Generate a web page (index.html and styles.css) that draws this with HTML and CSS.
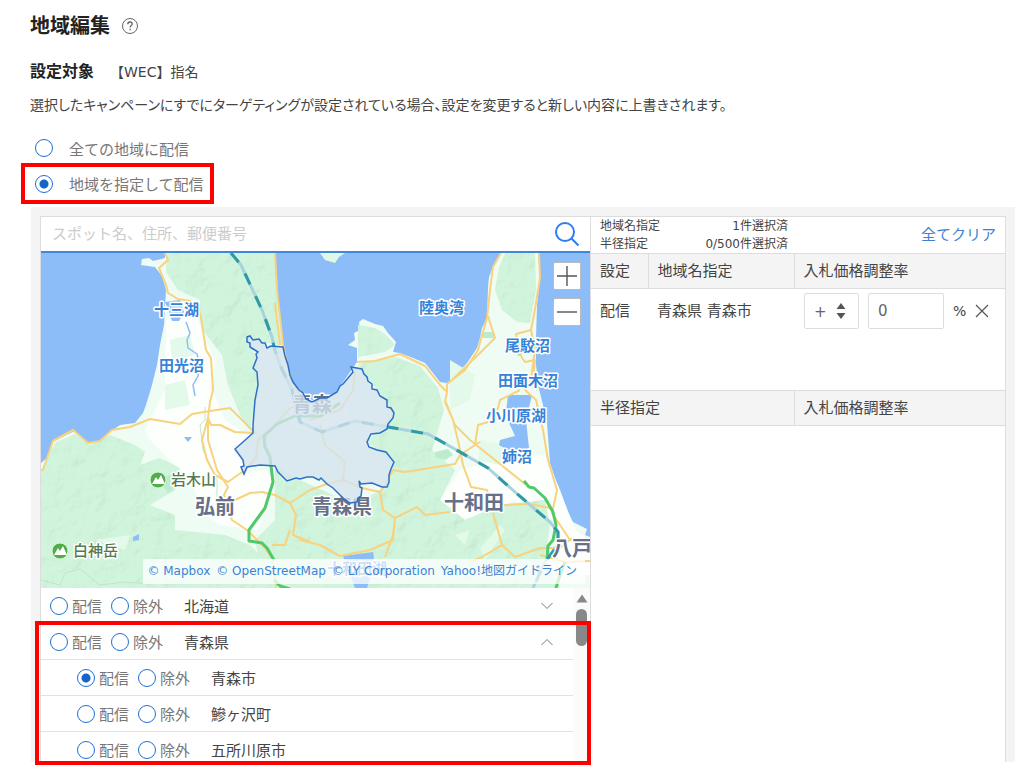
FILE: index.html
```html
<!DOCTYPE html>
<html lang="ja">
<head>
    <meta charset="UTF-8">
    <meta name="viewport" content="width=device-width, initial-scale=1">
    <title>地域編集</title>
    <link rel="stylesheet" href="styles.css">
</head>
<body>
    <header class="page-head">
        <h1>地域編集</h1>
        <button class="icon-btn" type="button" aria-label="ヘルプ">
            <svg width="18" height="18" viewBox="0 0 18 18" fill="none" stroke="#666">
                <circle cx="9" cy="9" r="7.5"/>
                <path d="M6.8 7.2c0-1.4 1-2.2 2.2-2.2s2.2.8 2.2 2c0 1.5-2.1 1.7-2.1 3.4M9.1 11.8v1.4" stroke-width="1.3"/>
            </svg>
        </button>
    </header>

    <div class="target">
        <strong>設定対象</strong>
        <span>【WEC】指名</span>
    </div>
    <p class="note">選択したキャンペーンにすでにターゲティングが設定されている場合、設定を変更すると新しい内容に上書きされます。</p>

    <div class="modes">
        <label class="mode"><input type="radio" name="mode">全ての地域に配信</label>
        <label class="mode marked"><input type="radio" name="mode" checked>地域を指定して配信</label>
    </div>

    <main class="panel">
        <section class="left">
            <form class="search">
                <input type="text" placeholder="スポット名、住所、郵便番号" aria-label="スポット名、住所、郵便番号">
                <button class="icon-btn" type="button" aria-label="検索">
                    <svg width="26" height="26" viewBox="0 0 26 26" fill="none" stroke="#2b7df0" stroke-width="2">
                        <circle cx="11" cy="11" r="9"/>
                        <path d="M17.5 17.5l7 7"/>
                    </svg>
                </button>
            </form>

            <div class="map">
                <svg class="map-canvas" viewBox="41 253 549 335" preserveAspectRatio="xMidYMid slice">
                    <defs>
                        <filter id="relief" x="0" y="0" width="100%" height="100%">
                            <feTurbulence type="fractalNoise" baseFrequency="0.05" numOctaves="4" seed="8"/>
                            <feDiffuseLighting surfaceScale="3" lighting-color="#ffffff" diffuseConstant="1.2">
                                <feDistantLight azimuth="225" elevation="55"/>
                            </feDiffuseLighting>
                        </filter>
                        <clipPath id="forest-clip">
                            <path d="M167 253H275L277 302L282 345L265 343L247 337L257 360L258 385L250 430L240 415L228 385L222 355L205 333L200 318V300L178 290L166 272ZM41 470L55 443L75 434L90 445L110 435L135 445L145 452L140 465L160 458L180 468L175 490L150 505L175 515V530L225 535L250 545L265 560V588H41ZM275 466L300 480L355 505L388 485L394 462L367 442L394 413L362 370L358 364L395 357L420 366L438 388L444 410L432 450L455 470L440 500L465 520L500 505L545 500L550 525L545 560L560 588H265L255 540L275 520ZM505 253H535L536 290L530 323L517 322L502 310L495 290L499 268ZM358 325L375 328L385 334L395 345L385 352L358 357Z"/>
                        </clipPath>
                    </defs>

                    <!-- sea and land -->
                    <rect x="41" y="253" width="549" height="335" fill="#8dbdf8"/>
                    <path fill="#effcf3" d="M165 253V258L153 261L149 258L142 259L141 265L155 267L162 276L166 290L164 325L160 345L157 365L152 385L146 405L143 413L135 423L120 425L110 432L100 442L88 443L75 431L53 441L47 458L41 463V588H590V537L585 535L587 529L573 522L567 510L558 487L550 463L547 423L543 405L538 385L536 365V338L537 305L540 278L538 253H500L493 267L489 277L488 288L487 318L482 328L480 338L477 348L467 363L453 378L447 383L440 382L433 373L425 363L413 358L400 353L393 352L396 342L388 333L383 326L375 324L363 319L359 322L360 330L354 333L355 340L348 345L357 348V362L353 368L343 382L337 392L327 398L312 402L303 393L293 382L288 365L283 347L282 328L278 302L277 278L275 253Z"/>
                    <path fill="#dff7e6" d="M320 253L325 260L335 263L339 257L345 253Z"/>
                    <path fill="#fcfffc" d="M166 320L196 315L205 340L215 360L212 390L225 420L248 436L240 455L246 472L274 470L270 500L258 530L220 525L205 515L190 480L150 440L145 430L165 390ZM440 500L460 470L500 460L545 455L560 490L575 530L590 540V575H560L553 520L515 500L490 515L455 520ZM285 405L305 400L345 400L350 420L320 435L290 425Z"/>
                    <g clip-path="url(#forest-clip)">
                        <rect x="41" y="253" width="549" height="335" fill="#d0f4dc"/>
                        <rect class="relief" x="41" y="253" width="549" height="335" filter="url(#relief)"/>
                    </g>
                    <path fill="#e3f9ea" d="M450 360L475 375L470 400L450 410ZM480 440L505 445L500 465L478 460ZM455 535L470 530L465 545ZM480 548L500 525L505 530L485 560ZM170 340L190 335L195 355L172 360ZM165 385L185 380L190 405L165 410ZM95 540L130 535L125 550Z"/>
                    <path fill="#bdebcb" d="M435 452L448 449L453 455L445 460L435 457ZM483 332H494V338H483ZM157 480L170 475L180 482L168 492Z"/>

                    <!-- lakes and rivers -->
                    <path fill="#8dbdf8" d="M165 302L180 300L184 312L179 321L172 321L170 315ZM184 437L192 437L188 442ZM133 537L139 534L139 540L133 541ZM508 395L532 395L526 420L529 448L520 453L508 450L499 445L500 440L515 436L510 425L506 412ZM343 556L373 552L375 565L367 588H355L350 575ZM519 338L526 338V352L518 356Z"/>
                    <path class="river" d="M186 322L190 333L187 340L188 348L197 354L200 365L198 376L193 385L195 396"/>
                    <path class="stream" d="M205 407V420L200 425L203 450L217 480V505M41 580L60 585L65 573L80 569L100 585L125 582L150 584"/>

                    <!-- national roads -->
                    <path class="road" d="M165 253L168 260L159 268L166 285L168 293L178 299L191 301M198 305L201 318L206 350L211 358L213 390L210 402L208 418M275 253L277 290L283 345L291 380L300 395M275 303L280 345"/>
                    <path class="road" d="M41 470L43 470L53 441L73 430L88 443L100 441L112 430L130 427L150 419L180 424L192 414L210 411L230 408L240 418L255 433L235 432L220 425L211 425L208 418L202 440L207 460L215 475L228 482L245 470L256 458L258 440L275 425L290 408L310 403"/>
                    <path class="road" d="M208 418L208 440L217 470L228 487L224 495L232 520L247 530L265 548L273 560L276 588M235 500L250 493L262 492L275 495L290 503L310 490L327 484L343 480L362 488L380 492L385 485L393 470L405 472L430 468L455 464L460 455L475 445L480 442M290 503L296 515L293 535L310 542M290 530L285 545L272 545"/>
                    <path class="road" d="M320 425L325 445L345 462L343 480M380 492L383 510L395 518L393 535L385 557M395 518L417 507L425 515L450 512M395 518L393 540L370 550L340 556L320 545L300 540M502 505L530 504L550 508M493 513L502 545L515 557L540 548L560 548L572 538M502 545L480 558L470 562"/>
                    <path class="road" d="M357 362L375 361L400 354L425 366L440 385L447 392L445 402L453 420L459 445L463 465L471 487L487 490L489 497M447 392V384L465 370L478 350L487 318L490 290L493 267L501 253M450 382L478 355L495 338L488 316M445 400L455 425L470 440L485 452L505 468L525 484M475 445L478 425L495 420L500 400L520 390"/>
                    <path class="road" d="M539 253L540 278L534 315L531 330L516 334L518 352L525 362L535 360L533 380L525 390L536 400L543 430L548 460L557 490L552 513L570 540L590 545M531 330L535 350L530 385M540 555L565 562L590 561M310 420L340 410L353 390L355 372"/>

                    <!-- expressway -->
                    <path class="expressway" d="M340 403L320 416L295 416L277 424L264 436L265 447L270 457L271 466L273 482L265 508L249 530V541L262 543L267 548L274 560M524 481L529 487L534 488L545 498L553 512L556 525L553 540L548 546L547 560M274 580L280 586L290 589M565 562L560 575L556 588"/>

                    <!-- shinkansen -->
                    <path class="rail" d="M231 253L241 265L262 310L272 337L274 347L280 365L292 390L300 422L322 432L355 421L388 427L428 434L453 448L488 468L515 492L550 522L558 532V545L545 562L533 588"/>
                    <path class="rail-dash" d="M231 253L241 265L262 310L272 337L274 347L280 365L292 390L300 422L322 432L355 421L388 427L428 434L453 448L488 468L515 492L550 522L558 532V545L545 562L533 588"/>

                    <text class="place city" x="292" y="412">青森</text>
                    <text class="place city" x="312" y="514">青森県</text>

                    <!-- Aomori city boundary -->
                    <path class="area" d="M247 337L250 336L253 340L259 339L262 343L265 343L267 348L271 346L283 347L285 356L288 365L290 375L293 382L299 390L303 393L306 399L312 402L320 398L327 398L337 392L340 386L343 384L353 372L351 367L362 369L364 374L367 377L368 381L372 384L372 389L377 390L380 396L387 400V407L391 408L394 413L393 418L388 424L387 429L380 433L371 434L367 442L369 447L377 450L386 452L394 462L391 469L389 475V482L387 487L382 487L372 483L361 484L359 481L360 487L362 488L361 496L358 498L357 502L350 503L343 498L333 488L327 484L321 478L319 480L313 477L307 477L300 479L296 478L287 481L278 472L275 466L260 465L247 467L244 474L241 467L244 466L243 460L235 449L243 442L253 433V425L255 400L258 385L257 372L253 368L257 358L256 354L258 352L250 347V343L247 342Z"/>

                    <g class="place lake">
                        <text x="154" y="315">十三湖</text>
                        <text x="159" y="371">田光沼</text>
                        <text x="419" y="313">陸奥湾</text>
                        <text x="505" y="351">尾駮沼</text>
                        <text x="498" y="386">田面木沼</text>
                        <text x="486" y="421">小川原湖</text>
                        <text x="502" y="462">姉沼</text>
                        <text x="327" y="574">十和田湖</text>
                    </g>
                    <g class="place city">
                        <text x="195" y="514">弘前</text>
                        <text x="444" y="510">十和田</text>
                        <text x="552" y="556">八戸</text>
                    </g>
                    <g class="place peak">
                        <text x="171" y="485">岩木山</text>
                        <text x="73" y="556">白神岳</text>
                    </g>
                    <g class="peak-mark">
                        <circle cx="158" cy="480" r="8"/>
                        <path d="M152 484L156 477L158 480L161 475L165 484Z"/>
                        <circle cx="60" cy="551" r="8"/>
                        <path d="M54 555L58 548L60 551L63 546L67 555Z"/>
                    </g>
                </svg>

                <div class="zoom">
                    <button type="button" aria-label="拡大">
                        <svg width="20" height="20" viewBox="0 0 20 20" stroke="#555" stroke-width="1.4"><path d="M0 10H20M10 0V20"/></svg>
                    </button>
                    <button type="button" aria-label="縮小">
                        <svg width="20" height="20" viewBox="0 0 20 20" stroke="#555" stroke-width="1.4"><path d="M0 10H20"/></svg>
                    </button>
                </div>
                <div class="credits">
                    <a href="#">© Mapbox</a>
                    <a href="#">© OpenStreetMap</a>
                    <a href="#">© LY Corporation</a>
                    <a href="#">Yahoo!地図ガイドライン</a>
                </div>
            </div>

            <div class="regions">
                <ul class="region-list">
                    <li>
                        <label><input type="radio" name="hokkaido">配信</label>
                        <label><input type="radio" name="hokkaido">除外</label>
                        <span class="region-name">北海道</span>
                        <button class="icon-btn" type="button" aria-label="開く">
                            <svg width="12" height="8" viewBox="0 0 12 8" fill="none" stroke="#777"><path d="M.5 1L6 6.500L11.500 1"/></svg>
                        </button>
                    </li>
                    <li>
                        <label><input type="radio" name="aomori">配信</label>
                        <label><input type="radio" name="aomori">除外</label>
                        <span class="region-name">青森県</span>
                        <button class="icon-btn" type="button" aria-label="閉じる">
                            <svg width="12" height="8" viewBox="0 0 12 8" fill="none" stroke="#777"><path d="M.5 7L6 1.500L11.500 7"/></svg>
                        </button>
                    </li>
                    <li class="child">
                        <label><input type="radio" name="aomori-shi" checked>配信</label>
                        <label><input type="radio" name="aomori-shi">除外</label>
                        <span class="region-name">青森市</span>
                    </li>
                    <li class="child">
                        <label><input type="radio" name="ajigasawa">配信</label>
                        <label><input type="radio" name="ajigasawa">除外</label>
                        <span class="region-name">鰺ヶ沢町</span>
                    </li>
                    <li class="child">
                        <label><input type="radio" name="goshogawara">配信</label>
                        <label><input type="radio" name="goshogawara">除外</label>
                        <span class="region-name">五所川原市</span>
                    </li>
                </ul>
                <div class="scrollbar">
                    <svg width="12" height="9" viewBox="0 0 12 9" fill="#888"><path d="M6 0.500L11.500 8.500H.5Z"/></svg>
                    <span class="thumb"></span>
                </div>
                <div class="list-mark"></div>
            </div>
        </section>

        <section class="right">
            <div class="summary">
                <dl>
                    <dt>地域名指定</dt><dd>1件選択済</dd>
                    <dt>半径指定</dt><dd>0/500件選択済</dd>
                </dl>
                <a href="#">全てクリア</a>
            </div>
            <table>
                <colgroup><col class="col-set"><col class="col-name"><col></colgroup>
                <thead>
                    <tr><th>設定</th><th>地域名指定</th><th>入札価格調整率</th></tr>
                </thead>
                <tbody>
                    <tr>
                        <td>配信</td>
                        <td>青森県 青森市</td>
                        <td>
                            <div class="bid">
                                <span class="sign">
                                    <select aria-label="増減"><option>+</option><option>-</option></select>
                                    <svg width="10" height="16" viewBox="0 0 10 16" fill="#555"><path d="M5 0L9.500 6H.5ZM5 16L.5 10H9.500Z"/></svg>
                                </span>
                                <input type="text" value="0" aria-label="入札価格調整率">
                                <span class="unit">%</span>
                                <button class="icon-btn" type="button" aria-label="削除">
                                    <svg width="14" height="14" viewBox="0 0 14 14" stroke="#555" stroke-width="1.200"><path d="M1 1L13 13M13 1L1 13"/></svg>
                                </button>
                            </div>
                        </td>
                    </tr>
                </tbody>
            </table>
            <table>
                <colgroup><col class="col-radius"><col></colgroup>
                <thead>
                    <tr><th>半径指定</th><th>入札価格調整率</th></tr>
                </thead>
            </table>
        </section>
    </main>
</body>
</html>
```

FILE: styles.css
```css
* {
    box-sizing: border-box;
}
body {
    margin: 0;
    padding: 12px 9px 8px 21px;
    background: #fff;
    color: #444;
    font-family: "DejaVu Sans", "Noto Sans CJK JP", sans-serif;
    font-size: 15px;
}
a {
    color: #3b82d6;
    text-decoration: none;
}
.icon-btn {
    display: flex;
    padding: 0;
    border: none;
    background: none;
    cursor: pointer;
}

/* heading */
.page-head {
    display: flex;
    align-items: center;
    gap: 11px;
    padding-left: 9px;
}
h1 {
    margin: 0;
    font-size: 20px;
    line-height: 28px;
    color: #222;
}
.target {
    display: flex;
    gap: 16px;
    margin-top: 20px;
    padding-left: 9px;
    font-size: 14px;
    line-height: 24px;
}
.target strong {
    font-size: 16px;
    color: #222;
}
.note {
    margin: 11px 0 18px;
    padding-left: 9px;
    font-size: 14px;
    font-feature-settings: "palt";
    line-height: 20px;
}

/* radios */
input[type="radio"] {
    appearance: none;
    width: 18px;
    height: 18px;
    margin: 0;
    border: 1px solid #1d6fd6;
    border-radius: 50%;
    background: #fff;
    flex: none;
}
input[type="radio"]:checked {
    background: radial-gradient(circle, #1565c8 4px, #fff 5px);
}
.modes {
    display: flex;
    flex-direction: column;
    align-items: flex-start;
}
.mode {
    display: flex;
    align-items: center;
    gap: 16px;
    height: 30px;
    padding: 0 10px 0 14px;
    color: #777;
}
.mode.marked {
    height: 41px;
    padding: 0 6px 0 10px;
    border: 4px solid #f00;
}

/* panel */
.panel {
    display: grid;
    grid-template-columns: 551fr 415fr;
    margin: 3px 0 0 10px;
    padding: 9px 9px 0;
    background: #f4f4f4;
}
.left,
.right {
    min-width: 0;
    background: #fff;
    border: 1px solid #ddd;
    border-bottom: none;
}
.right {
    border-left: none;
}

.search {
    display: flex;
    align-items: center;
    height: 36px;
    padding: 0 10px 0 11px;
    border-bottom: 2px solid #3f86dc;
}
.search input {
    flex: 1;
    min-width: 0;
    padding: 0;
    border: none;
    outline: none;
    font: inherit;
}
.search input::placeholder {
    color: #ccc;
}

/* map */
.map {
    position: relative;
    height: 335px;
    overflow: hidden;
}
.map-canvas {
    display: block;
    width: 100%;
    height: 100%;
}
.relief {
    opacity: 0.2;
    mix-blend-mode: multiply;
}
.road,
.river,
.stream,
.expressway,
.rail,
.rail-dash {
    fill: none;
    stroke-linejoin: round;
}
.road {
    stroke: #f9d27d;
    stroke-width: 2;
}
.river {
    stroke: #8dbdf8;
    stroke-width: 1.5;
}
.stream {
    stroke: #c3e3cf;
    stroke-width: 1;
}
.expressway {
    stroke: #50c968;
    stroke-width: 3;
}
.rail {
    stroke: #a9d3dc;
    stroke-width: 3;
}
.rail-dash {
    stroke: #2d9aa6;
    stroke-width: 3;
    stroke-dasharray: 12 13;
}
.area {
    fill: #d5e3ee;
    fill-opacity: 0.8;
    stroke: #2c70c9;
    stroke-width: 1.5;
}
.place {
    font-family: "Noto Sans CJK JP", sans-serif;
    font-weight: 700;
    stroke: #fff;
    stroke-width: 3;
    stroke-linejoin: round;
    paint-order: stroke;
}
.lake {
    font-size: 15px;
    fill: #3583d8;
}
.city {
    font-size: 20px;
    fill: #667088;
}
.peak {
    font-size: 15px;
    font-weight: 500;
    fill: #557a50;
}
.peak-mark circle {
    fill: #4fae48;
    stroke: #dff2dc;
}
.peak-mark path {
    fill: #fff;
}
.zoom {
    position: absolute;
    top: 9px;
    right: 9px;
    display: grid;
    gap: 8px;
}
.zoom button {
    display: grid;
    place-items: center;
    width: 28px;
    height: 28px;
    padding: 0;
    border: 1px solid #bbb;
    border-radius: 2px;
    background: #fff;
}
.credits {
    position: absolute;
    right: 5px;
    bottom: 4px;
    display: flex;
    gap: 6px;
    padding: 0 8px 0 4px;
    background: rgba(255, 255, 255, 0.75);
    font-size: 12px;
    line-height: 25px;
    white-space: nowrap;
}

/* region list */
.regions {
    position: relative;
    display: flex;
    height: 174px;
}
.region-list {
    flex: 1;
    margin: 0;
    padding: 0;
    list-style: none;
    overflow: hidden;
}
.region-list li {
    display: flex;
    align-items: center;
    gap: 9px;
    height: 36px;
    padding: 0 20px 0 9px;
    border-bottom: 1px solid #e2e2e2;
}
.region-list .child {
    padding-left: 36px;
}
.region-list label {
    display: flex;
    align-items: center;
    gap: 4px;
    color: #777;
}
.region-name {
    flex: 1;
    padding-left: 12px;
}
.scrollbar {
    display: flex;
    flex-direction: column;
    align-items: center;
    gap: 6px;
    width: 17px;
    padding-top: 6px;
    background: #fbfbfb;
}
.thumb {
    width: 11px;
    height: 37px;
    border-radius: 6px;
    background: #888;
}
.list-mark {
    position: absolute;
    inset: 33px -1px -3px -6px;
    border: 4px solid #f00;
}

/* selected regions */
.summary {
    display: flex;
    align-items: center;
    justify-content: space-between;
    height: 36px;
    padding: 0 9px;
}
.summary dl {
    display: grid;
    grid-template-columns: 88px 100px;
    margin: 0;
    font-size: 12px;
    line-height: 18px;
}
.summary dd {
    margin: 0;
    text-align: right;
}
.summary a {
    line-height: 20px;
}
table {
    width: 100%;
    table-layout: fixed;
    border-collapse: collapse;
}
.col-set {
    width: 57px;
}
.col-name {
    width: 146px;
}
.col-radius {
    width: 203px;
}
th {
    height: 35px;
    padding: 0 9px;
    border-top: 1px solid #ddd;
    border-bottom: 1px solid #ddd;
    background: #f4f4f4;
    font-weight: 400;
    line-height: 20px;
    text-align: left;
}
th + th {
    border-left: 1px solid #ddd;
}
td {
    height: 101px;
    padding: 4px 9px;
    vertical-align: top;
    line-height: 36px;
}
td:last-child {
    padding-left: 10px;
}
.bid {
    display: flex;
    align-items: center;
    gap: 9px;
}
.sign {
    position: relative;
    display: flex;
    width: 55px;
}
.sign svg {
    position: absolute;
    top: 10px;
    right: 13px;
    pointer-events: none;
}
.bid select,
.bid input {
    appearance: none;
    height: 36px;
    padding: 0 9px;
    border: 1px solid #ddd;
    border-radius: 2px;
    background: #fff;
    color: #666;
    font: inherit;
}
.bid select {
    width: 100%;
}
.bid input {
    width: 76px;
}
.unit {
    font-size: 14px;
}
```
